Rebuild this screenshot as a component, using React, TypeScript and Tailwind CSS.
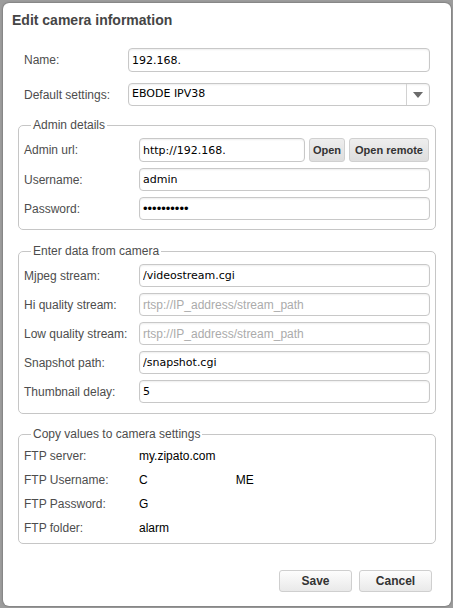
import React from "react";

const labelCls = "shrink-0 text-[12px] text-[#4d4d4d] font-['Liberation_Sans',Arial,sans-serif]";
const inputCls =
  "h-[23px] min-w-0 flex-1 rounded-[4px] border border-[#c8c8c8] bg-white px-[3px] text-[11px] text-black font-['DejaVu_Sans',Verdana,sans-serif] shadow-[inset_0_1px_2px_rgba(0,0,0,0.07)] outline-none";
const legendCls =
  "ml-[7px] px-[2px] text-[12px] leading-[14px] text-[#4d4d4d] font-['Liberation_Sans',Arial,sans-serif]";
const fieldsetCls = "rounded-[5px] border border-[#c6c6c6] px-[5px]";

function Row({ label, width, children }: { label: string; width: string; children: React.ReactNode }) {
  return (
    <div className="flex items-center">
      <span className={`${labelCls} ${width}`}>{label}</span>
      {children}
    </div>
  );
}

function SmallButton({ width, children }: { width: string; children: React.ReactNode }) {
  return (
    <button
      className={`block h-[24px] shrink-0 rounded-[3px] border border-[#d0d0d0] bg-gradient-to-b from-[#eeeeee] to-[#dedede] px-0 text-[11px] font-bold text-[#333] font-['Liberation_Sans',Arial,sans-serif] ${width}`}
    >
      {children}
    </button>
  );
}

function DialogButton({ children }: { children: React.ReactNode }) {
  return (
    <button className="block h-[22px] w-[73px] rounded-[3px] border border-[#cfcfcf] bg-gradient-to-b from-[#fdfdfd] to-[#e9e9e9] text-[12px] font-bold text-[#333] font-['Liberation_Sans',Arial,sans-serif]">
      {children}
    </button>
  );
}

export default function App() {
  return (
    <div className="h-[608px] w-[453px] overflow-hidden bg-[#9c9c9c] pl-[3px] pr-[2px] pt-[3px]">
      <div className="h-[603px] rounded-[6px] bg-white px-[15px] pt-[8px] shadow-[0_0_2px_rgba(0,0,0,0.5)]">
        <h1 className="-ml-[6px] text-[14px] font-bold leading-[18px] text-[#454545] font-['Liberation_Sans',Arial,sans-serif]">
          Edit camera information
        </h1>

        <div className="mt-[19px] flex flex-col gap-[11px] px-[6px]">
          <Row label="Name:" width="w-[104px]">
            <input className={`${inputCls} h-[24px]`} defaultValue="192.168." />
          </Row>
          <Row label="Default settings:" width="w-[104px]">
            <div className="flex h-[23px] flex-1 items-center rounded-[4px] border border-[#c8c8c8] bg-white shadow-[inset_0_1px_2px_rgba(0,0,0,0.07)]">
              <span className="flex-1 px-[3px] text-[11px] text-black font-['DejaVu_Sans',Verdana,sans-serif]">
                EBODE IPV38
              </span>
              <span className="flex h-full w-[23px] items-center justify-center border-l border-[#d2d2d2]">
                <svg width="10" height="6" viewBox="0 0 10 6">
                  <path d="M0 0h10L5 6z" fill="#6b6b6b" />
                </svg>
              </span>
            </div>
          </Row>
        </div>

        <fieldset className={`mt-[12px] pb-[9px] pt-[6px] ${fieldsetCls}`}>
          <legend className={legendCls}>Admin details</legend>
          <div className="flex flex-col gap-[6px]">
            <Row label="Admin url:" width="w-[115px]">
              <input className={`${inputCls} h-[24px] max-w-[166px]`} defaultValue="http://192.168." />
              <div className="ml-[4px] flex gap-[4px]">
                <SmallButton width="w-[36px]">Open</SmallButton>
                <SmallButton width="w-[80px]">Open remote</SmallButton>
              </div>
            </Row>
            <Row label="Username:" width="w-[115px]">
              <input className={inputCls} defaultValue="admin" />
            </Row>
            <Row label="Password:" width="w-[115px]">
              <input
                type="password"
                className={`${inputCls} text-[13px] font-['Liberation_Sans',Arial,sans-serif]`}
                defaultValue="abcdefghij"
              />
            </Row>
          </div>
        </fieldset>

        <fieldset className={`mt-[14px] pb-[10px] pt-[6px] ${fieldsetCls}`}>
          <legend className={legendCls}>Enter data from camera</legend>
          <div className="flex flex-col gap-[6px]">
            <Row label="Mjpeg stream:" width="w-[115px]">
              <input className={inputCls} defaultValue="/videostream.cgi" />
            </Row>
            <Row label="Hi quality stream:" width="w-[115px]">
              <input
                className={`${inputCls} text-[12px] font-['Liberation_Sans',Arial,sans-serif] placeholder:text-[#ababab]`}
                placeholder="rtsp://IP_address/stream_path"
              />
            </Row>
            <Row label="Low quality stream:" width="w-[115px]">
              <input
                className={`${inputCls} text-[12px] font-['Liberation_Sans',Arial,sans-serif] placeholder:text-[#ababab]`}
                placeholder="rtsp://IP_address/stream_path"
              />
            </Row>
            <Row label="Snapshot path:" width="w-[115px]">
              <input className={inputCls} defaultValue="/snapshot.cgi" />
            </Row>
            <Row label="Thumbnail delay:" width="w-[115px]">
              <input className={inputCls} defaultValue="5" />
            </Row>
          </div>
        </fieldset>

        <fieldset className={`mt-[13px] pb-[3px] pt-[3px] ${fieldsetCls}`}>
          <legend className={legendCls}>Copy values to camera settings</legend>
          {[
            ["FTP server:", "my.zipato.com"],
            ["FTP Username:", "C"],
            ["FTP Password:", "G"],
            ["FTP folder:", "alarm"],
          ].map(([label, value]) => (
            <div key={label} className="flex h-[24px] items-center">
              <span className={`${labelCls} w-[115px]`}>{label}</span>
              <span className="text-[12px] text-black font-['Liberation_Sans',Arial,sans-serif]">
                {value}
                {label === "FTP Username:" && <span className="ml-[88px]">ME</span>}
              </span>
            </div>
          ))}
        </fieldset>

        <div className="mt-[26px] flex justify-end gap-[7px] pr-[4px]">
          <DialogButton>Save</DialogButton>
          <DialogButton>Cancel</DialogButton>
        </div>
      </div>
    </div>
  );
}
